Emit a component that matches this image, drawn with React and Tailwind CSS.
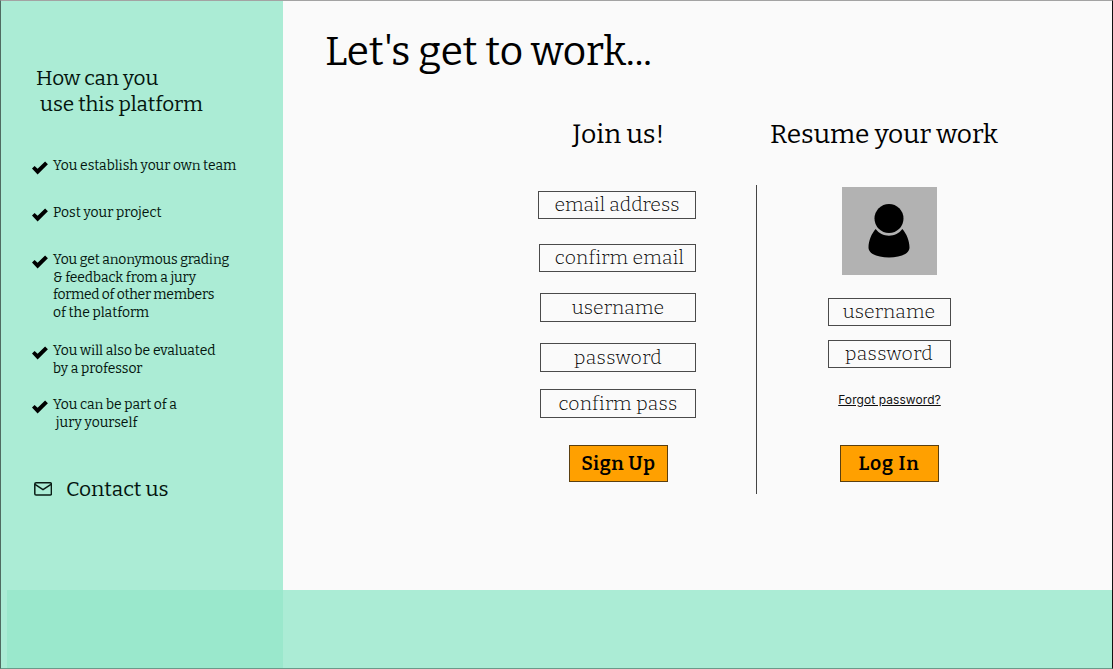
const steps = [
  { lines: [["You establish your own team", "tracking-[-0.003em]"]], gap: "h-[47px]" },
  { lines: [["Post your project", "tracking-normal"]], gap: "h-[47px]" },
  {
    lines: [
      ["You get anonymous grading", "tracking-[-0.009em]"],
      ["& feedback from a jury", "tracking-[-0.006em]"],
      ["formed of other members", "tracking-[-0.017em]"],
      ["of the platform", "tracking-normal"],
    ],
    gap: "h-[91px]",
  },
  { lines: [["You will also be evaluated", "tracking-[-0.003em]"], ["by a professor", "tracking-[-0.003em]"]], gap: "h-[54px]" },
  { lines: [["You can be part of a", "tracking-[-0.003em]"], ["\u00a0jury yourself", "tracking-normal"]], gap: "h-[54px]" },
];

function Check() {
  return (
    <svg className="mt-[4px] h-[14px] w-[16px] shrink-0" viewBox="0 0 16 14">
      <path d="M0 7.6 L2.6 4.9 L5.6 7.7 L13.1 0.6 L15.9 3.3 L5.6 13.4 Z" fill="#000" />
    </svg>
  );
}

function Envelope() {
  return (
    <svg className="h-[14px] w-[18px] shrink-0" viewBox="0 0 18 14" fill="none" stroke="#0a1c15" strokeWidth="1.5" strokeLinejoin="round">
      <rect x="0.8" y="0.8" width="16.6" height="12.3" rx="1.3" />
      <path d="M1 2.4 L9 7.7 L17 2.4" />
    </svg>
  );
}

function Field({ children, size, text }) {
  return (
    <div className={`flex shrink-0 items-center justify-center border border-[#4a4a4a] text-[19.4px] font-[340] whitespace-nowrap text-black ${size}`}>
      <span className={text}>{children}</span>
    </div>
  );
}

function Action({ children, text }) {
  return (
    <button className="flex h-[37px] w-[99px] shrink-0 items-center justify-center border border-[#5a3f10] bg-[#ffa000] pt-px text-[19.4px] font-semibold whitespace-nowrap text-black">
      <span className={text}>{children}</span>
    </button>
  );
}

export default function App() {
  return (
    <div className="flex h-[669px] w-[1113px] flex-col overflow-hidden border-t border-r border-b border-l border-t-[#a3a3a3] border-r-[#111] border-b-[#6b9a8a] border-l-[#4f6b61] bg-[#fafafa] font-['Bitter','DejaVu_Serif_Condensed',serif] text-black">
      <div className="flex h-[589px] shrink-0">
        <aside className="flex w-[282px] shrink-0 flex-col bg-[#abecd5] text-[#04150e]">
          <h2 className="mt-[65px] ml-[35px] text-[20.8px] leading-[26px] tracking-[-0.003em] whitespace-nowrap">
            How can you
            <br />
            &nbsp;use this platform
          </h2>
          <ul className="mt-[39px] ml-[31px] text-[13.9px] leading-[17.5px]">
            {steps.map((s) => (
              <li key={s.lines[0][0]} className={`flex gap-[5px] ${s.gap}`}>
                <Check />
                <div className="whitespace-nowrap">
                  {s.lines.map(([t, tr]) => (
                    <p key={t} className={tr}>{t}</p>
                  ))}
                </div>
              </li>
            ))}
          </ul>
          <div className="mt-[26px] ml-[33px] flex items-center gap-[14px] text-[21px] leading-[26px]">
            <Envelope />
            <span>Contact us</span>
          </div>
        </aside>
        <main className="flex flex-1 flex-col">
          <h1 className="mt-[26px] ml-[42px] text-[40.5px] leading-[50px] font-[430] whitespace-nowrap">Let's get to work...</h1>
          <div className="mt-[40px] flex">
            <section className="ml-[255px] flex w-[158px] flex-col items-end">
              <h2 className="mb-[40px] w-[158px] pl-[3px] text-center text-[26.6px] leading-[34px]">Join us!</h2>
              <Field size="h-[28px] w-[158px] mb-[25px]" text="tracking-[0.002em]">email address</Field>
              <Field size="h-[28px] w-[157px] mb-[21px] pl-[4px]" text="tracking-[0.012em]">confirm email</Field>
              <Field size="h-[29px] w-[156px] mb-[21px] pt-px" text="tracking-[0.008em]">username</Field>
              <Field size="h-[29px] w-[156px] mb-[17px] pt-px" text="tracking-[0.02em]">password</Field>
              <Field size="h-[29px] w-[156px] mb-[27px] pt-px" text="tracking-[0.012em]">confirm pass</Field>
              <div className="mr-[28px]">
                <Action text="tracking-[0.03em]">Sign Up</Action>
              </div>
            </section>
            <div className="mt-[68px] ml-[60px] h-[309px] w-px bg-[#444]" />
            <section className="ml-[13px] flex w-[228px] flex-col items-center">
              <h2 className="mb-[36px] text-[26.3px] leading-[34px] whitespace-nowrap">Resume your work</h2>
              <div className="ml-[10px] flex flex-col items-center">
                <div className="mb-[23px] flex h-[88px] w-[95px] items-center justify-center bg-[#b2b2b2]">
                  <svg className="h-[56px] w-[42px]" viewBox="0 0 42 56">
                    <circle cx="21" cy="15.5" r="14.5" />
                    <path d="M7.7 26 C3.5 30.5 0.5 38 0.5 44.5 C0.5 51 10 54.5 21 54.5 C32 54.5 41.5 51 41.5 44.5 C41.5 38 38.5 30.5 34.3 26 C31 30.5 26.5 32.7 21 32.7 C15.5 32.7 11 30.5 7.7 26 Z" />
                  </svg>
                </div>
                <Field size="h-[28px] w-[123px] mb-[14px]" text="tracking-[0.008em]">username</Field>
                <Field size="h-[28px] w-[123px] mb-[23px]" text="tracking-[0.02em]">password</Field>
                <a className="mb-[36px] ml-px font-[Inter,sans-serif] text-[12px] leading-[18px] tracking-[0.006em] whitespace-nowrap text-[#111] underline underline-offset-1">Forgot password?</a>
                <Action text="tracking-[0.045em]">Log In</Action>
              </div>
            </section>
          </div>
        </main>
      </div>
      <footer className="flex h-[78px] shrink-0">
        <div className="w-[6px] bg-[#abecd5]" />
        <div className="w-[276px] bg-[#9ae8cc]" />
        <div className="flex-1 bg-[#abecd5]" />
      </footer>
    </div>
  );
}
